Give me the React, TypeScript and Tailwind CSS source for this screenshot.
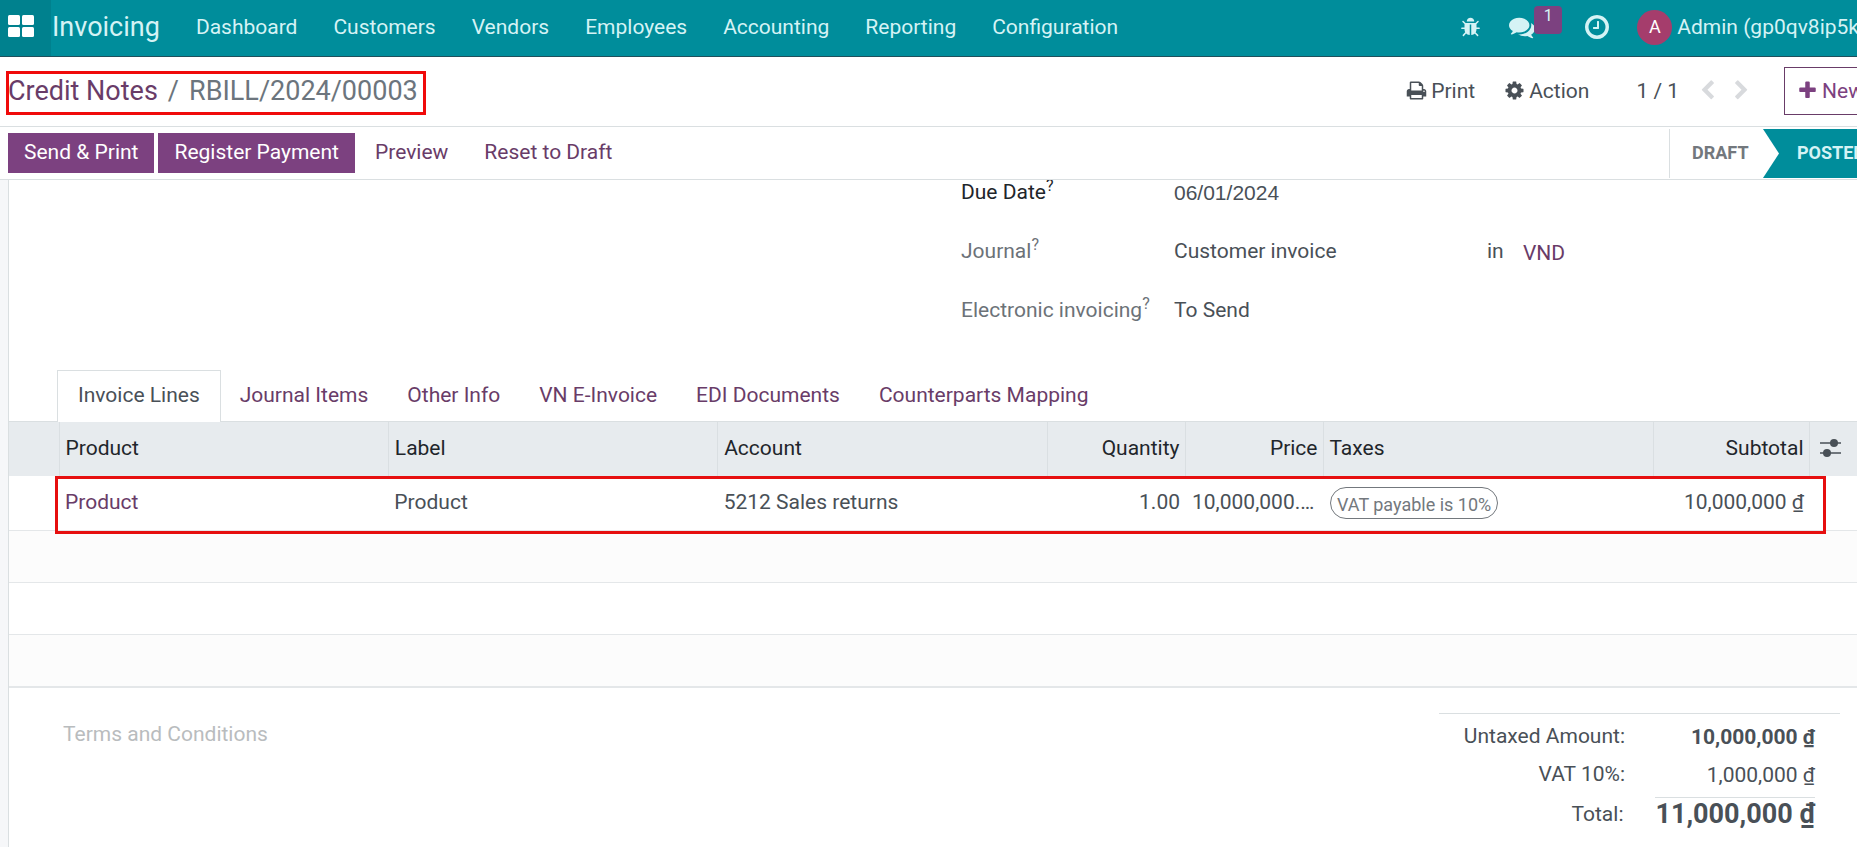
import React from 'react';

const ICONS = {
  bug: 'M1696 960q0 26-19 45t-45 19h-224q0 171-67 290l208 209q19 19 19 45t-19 45q-18 19-45 19t-45-19l-198-197q-5 5-15 13t-42 28.5-65 36.5-82 29-97 13v-896h-128v896q-51 0-101.5-13.5t-87-33-66-39-43.5-32.5l-15-14-183 207q-20 21-48 21-24 0-43-16-19-18-20.5-44.5t15.5-46.5l202-227q-58-114-58-274h-224q-26 0-45-19t-19-45 19-45 45-19h224v-294l-173-173q-19-19-19-45t19-45 45-19 45 19l173 173h844l173-173q19-19 45-19t45 19 19 45-19 45l-173 173v294h224q26 0 45 19t19 45zm-480-576h-640q0-133 93.5-226.5t226.5-93.5 226.5 93.5 93.5 226.5z',
  comments:
    'M1408 768q0 139-94 257t-256.5 186.5-353.5 68.5q-86 0-176-16-124 88-278 128-36 9-86 16h-3q-11 0-20.5-8t-11.5-21q-1-3-1-6.5t.5-6.5 2-6l2.5-5 3.5-5.5 4-5 4.5-5 4-4.5q5-6 23-25t26-29.5 22.5-29 25-38.5 20.5-44q-124-72-195-177t-71-224q0-139 94-257t256.5-186.5 353.5-68.5 353.5 68.5 256.5 186.5 94 257zm384 256q0 120-71 224.5t-195 176.5q10 24 20.5 44t25 38.5 22.5 29 26 29.5 23 25q1 1 4 4.5t4.5 5 4 5 3.5 5.5l2.5 5 2 6 .5 6.5-1 6.5q-3 14-13 22t-22 7q-50-7-86-16-154-40-278-128-90 16-176 16-271 0-472-132 58 4 88 4 161 0 309-45t264-129q125-92 192-212t67-254q0-77-23-152 129 71 204 178t75 230z',
  clock:
    'M1024 544v448q0 14-9 23t-23 9h-320q-14 0-23-9t-9-23v-64q0-14 9-23t23-9h224v-352q0-14 9-23t23-9h64q14 0 23 9t9 23zm416 352q0-148-73-273t-198-198-273-73-273 73-198 198-73 273 73 273 198 198 273 73 273-73 198-198 73-273zm224 0q0 209-103 385.5t-279.5 279.5-385.5 103-385.5-103-279.5-279.5-103-385.5 103-385.5 279.5-279.5 385.5-103 385.5 103 279.5 279.5 103 385.5z',
  print:
    'M448 1536h896v-256h-896v256zm0-640h896v-384h-160q-40 0-68-28t-28-68v-160h-640v640zm1152 64q0-26-19-45t-45-19-45 19-19 45 19 45 45 19 45-19 19-45zm128 0v416q0 13-9.5 22.5t-22.5 9.5h-224v160q0 40-28 68t-68 28h-960q-40 0-68-28t-28-68v-160h-224q-13 0-22.5-9.5t-9.5-22.5v-416q0-79 56.5-135.5t135.5-56.5h64v-544q0-40 28-68t68-28h672q40 0 88 20t76 48l152 152q28 28 48 76t20 88v256h64q79 0 135.5 56.5t56.5 135.5z',
  cog: 'M1152 896q0-106-75-181t-181-75-181 75-75 181 75 181 181 75 181-75 75-181zm512-109v222q0 12-8 23t-20 13l-185 28q-19 54-39 91 35 50 107 138 10 12 10 25t-9 23q-27 37-99 108t-94 71q-12 0-26-9l-138-108q-44 23-91 38-16 136-29 186-7 28-36 28h-222q-14 0-24.5-8.5t-11.5-21.5l-28-184q-49-16-90-37l-141 107q-10 9-25 9-14 0-25-11-126-114-165-168-7-10-7-23 0-12 8-23 15-21 51-66.5t54-70.5q-27-50-41-99l-183-27q-13-2-21-12.5t-8-23.5v-222q0-12 8-23t19-13l186-28q14-46 39-92-40-57-107-138-10-12-10-24 0-10 9-23 26-36 98.5-107.5t94.5-71.5q13 0 26 10l138 107q44-23 91-38 16-136 29-186 7-28 36-28h222q14 0 24.5 8.5t11.5 21.5l28 184q49 16 90 37l142-107q9-9 24-9 13 0 25 10 129 119 165 170 7 8 7 22 0 12-8 23-15 21-51 66.5t-54 70.5q26 50 41 98l183 28q13 2 21 12.5t8 23.5z',
  left: 'M1427 301l-531 531 531 531q19 19 19 45t-19 45l-166 166q-19 19-45 19t-45-19l-742-742q-19-19-19-45t19-45l742-742q19-19 45-19t45 19l166 166q19 19 19 45t-19 45z',
  right:
    'M1363 877l-742 742q-19 19-45 19t-45-19l-166-166q-19-19-19-45t19-45l531-531-531-531q-19-19-19-45t19-45l166-166q19-19 45-19t45 19l742 742q19 19 19 45t-19 45z',
  plus: 'M1600 736v192q0 40-28 68t-68 28h-416v416q0 40-28 68t-68 28h-192q-40 0-68-28t-28-68v-416h-416q-40 0-68-28t-28-68v-192q0-40 28-68t68-28h416v-416q0-40 28-68t68-28h192q40 0 68 28t28 68v416h416q40 0 68 28t28 68z',
};

const Icon: React.FC<{ name: keyof typeof ICONS; className?: string }> = ({ name, className = 'size-[21px]' }) => (
  <svg viewBox="0 0 1792 1792" fill="currentColor" className={`shrink-0 ${className}`} aria-hidden="true">
    <path d={ICONS[name]} />
  </svg>
);

const MENU = ['Dashboard', 'Customers', 'Vendors', 'Employees', 'Accounting', 'Reporting', 'Configuration'];

const Navbar = () => (
  <header className="flex h-[57px] shrink-0 items-stretch border-b border-[#1f505c] bg-[#008d9b] text-[#d5f3f5]">
    <button aria-label="Home menu" className="w-[51px] shrink-0 bg-[#00818e] pb-1 pl-2 text-white">
      <svg viewBox="0 0 26 22" className="h-[22px] w-[26px]" fill="currentColor" preserveAspectRatio="none">
        <rect x="0" y="0" width="12" height="10" rx="1.5" />
        <rect x="14" y="0" width="12" height="10" rx="1.5" />
        <rect x="0" y="12" width="12" height="10" rx="1.5" />
        <rect x="14" y="12" width="12" height="10" rx="1.5" />
      </svg>
    </button>
    <a href="#" className="flex items-center pb-0.5 pl-px text-[27px]">Invoicing</a>
    <nav className="flex items-center gap-9 pb-0.5 pl-9">
      {MENU.map((item) => (
        <a key={item} href="#">{item}</a>
      ))}
    </nav>
    <div className="-mr-0.5 ml-auto flex shrink-0 items-center pb-0.5">
      <button aria-label="Debug"><Icon name="bug" /></button>
      <button aria-label="Messages" className="relative ml-7">
        <Icon name="comments" className="size-[26px]" />
        <span className="absolute -top-2 left-[25px] h-7 w-7 rounded bg-[#7c4180] text-center text-base leading-5">1</span>
      </button>
      <button aria-label="Activities" className="ml-12"><Icon name="clock" className="size-7" /></button>
      <button className="ml-[26px] flex items-center gap-[5px]">
        <span className="flex size-[35px] items-center justify-center rounded-full bg-[#a53d6c] text-lg text-white">A</span>
        Admin (gp0qv8ip5k
      </button>
    </div>
  </header>
);

const ControlPanel = () => (
  <div className="flex h-[70px] shrink-0 items-center border-b border-[#dadfe1] pb-0.5">
    <div className="relative ml-2 flex items-center gap-2.5 text-[27px] text-[#6c757d]">
      <a href="#" className="text-[#693c68]">Credit Notes</a>
      <span>/</span>
      <span>RBILL/2024/00003</span>
      <div className="pointer-events-none absolute -bottom-2 -left-0.5 -right-2 -top-1 border-[3px] border-[#f00a0a]" />
    </div>
    <div className="-mr-5 ml-auto flex shrink-0 items-center">
      <button className="flex items-center gap-1"><Icon name="print" />Print</button>
      <button className="ml-[29px] flex items-center gap-1"><Icon name="cog" />Action</button>
      <span className="ml-[47px]">1 / 1</span>
      <button aria-label="Previous" className="ml-[18px] text-[#d8dadd]"><Icon name="left" /></button>
      <button aria-label="Next" className="ml-[13px] text-[#d8dadd]"><Icon name="right" /></button>
      <button className="ml-8 flex h-12 items-center gap-1 border border-[#693c68] px-3 text-[#7c4180]">
        <Icon name="plus" />New
      </button>
    </div>
  </div>
);

const StatusBar = () => (
  <div className="flex h-[53px] shrink-0 items-center border-b border-[#dadfe1] pl-2">
    <div className="flex gap-1">
      <button className="h-10 bg-[#7c4180] px-4 pb-0.5 text-white">Send &amp; Print</button>
      <button className="h-10 bg-[#7c4180] px-4 pb-0.5 text-white">Register Payment</button>
      <button className="h-10 px-4 pb-0.5 text-[#693c68]">Preview</button>
      <button className="h-10 px-4 pb-0.5 text-[#693c68]">Reset to Draft</button>
    </div>
    <div className="-mr-7 ml-auto flex h-[49px] shrink-0 items-center text-lg font-bold">
      <span className="flex h-full w-[94px] items-center border-l border-[#dadfe1] pl-[22px] text-[#73787d]">DRAFT</span>
      <span className="relative flex h-full w-[122px] items-center bg-[#008d9b] pl-[34px] text-[#d5f3f5]">
        <svg viewBox="0 0 16 49" className="absolute left-0 top-0 h-full w-4" aria-hidden="true">
          <path d="M0 0L16 24.5L0 49Z" fill="#fff" />
        </svg>
        POSTED
      </span>
    </div>
  </div>
);

const FieldLabel: React.FC<{ text: string; required?: boolean }> = ({ text, required }) => (
  <span className={`w-[213px] shrink-0 ${required ? 'text-[#1f262b]' : 'text-[#6c7278]'}`}>
    {text}
    <sup className="-top-2 text-base leading-none">?</sup>
  </span>
);

const Fields = () => (
  <div className="-mt-1 ml-[952px] flex flex-col pb-[17px]">
    <div className="flex h-[59px] items-start">
      <FieldLabel text="Due Date" required />
      <span className="pt-px font-['Liberation_Sans',sans-serif]">06/01/2024</span>
    </div>
    <div className="flex h-[59px] items-start">
      <FieldLabel text="Journal" />
      <span className="w-[313px]">Customer invoice</span>
      <span className="w-9">in</span>
      <a href="#" className="pt-0.5 text-[#693c68]">VND</a>
    </div>
    <div className="flex h-[59px] items-start">
      <FieldLabel text="Electronic invoicing" />
      <span>To Send</span>
    </div>
  </div>
);

const TABS = ['Invoice Lines', 'Journal Items', 'Other Info', 'VN E-Invoice', 'EDI Documents', 'Counterparts Mapping'];

const Tabs = () => (
  <div role="tablist" className="flex h-[52px] border-b border-[#dadfe1] pl-[49px]">
    {TABS.map((tab, i) => (
      <button
        key={tab}
        role="tab"
        aria-selected={i === 0}
        className={`-mb-px -ml-px border border-b-0 pb-1 ${
          i === 0 ? 'border-[#dadfe1] bg-white px-5' : 'border-transparent px-[19px] text-[#693c68]'
        }`}
      >
        {tab}
      </button>
    ))}
  </div>
);

const TH = 'border-l border-[#dadfe2] pb-0.5 pl-1.5 pr-[5px] font-normal';
const TD = 'pb-0.5 pl-1.5 pr-[5px]';

const InvoiceLines = () => (
  <div className="relative">
    <table className="w-full table-fixed border-collapse">
      <colgroup>
        <col className="w-[50px]" />
        <col />
        <col />
        <col />
        <col className="w-[138px]" />
        <col className="w-[138px]" />
        <col className="w-[330px]" />
        <col className="w-[156px]" />
        <col className="w-12" />
      </colgroup>
      <thead>
        <tr className="h-[54px] bg-[#e7ebee] text-left text-[#1f262b]">
          <th />
          <th className={TH}>Product</th>
          <th className={TH}>Label</th>
          <th className={TH}>Account</th>
          <th className={`${TH} text-right`}>Quantity</th>
          <th className={`${TH} text-right`}>Price</th>
          <th className={TH}>Taxes</th>
          <th className={`${TH} text-right`}>Subtotal</th>
          <th className="border-l border-[#dadfe2] pb-0.5 pl-2.5">
            <button aria-label="Optional columns" className="block text-[#495057]">
              <svg viewBox="0 0 21 20" className="h-5 w-[21px]" aria-hidden="true">
                <path d="M0 5H21M0 15H21" stroke="currentColor" strokeWidth="1.6" />
                <circle cx="14" cy="5" r="4" fill="currentColor" />
                <circle cx="7" cy="15" r="4" fill="currentColor" />
              </svg>
            </button>
          </th>
        </tr>
      </thead>
      <tbody>
        <tr className="h-[54px] border-b border-[#e4e7e9]">
          <td />
          <td className={TD}><a href="#" className="text-[#693c68]">Product</a></td>
          <td className={TD}>Product</td>
          <td className={TD}>5212 Sales returns</td>
          <td className={`${TD} text-right`}>1.00</td>
          <td className="truncate px-[7px] pb-0.5">10,000,000.00</td>
          <td className="px-[7px]">
            <span className="flex h-8 w-fit items-center rounded-full border border-[#73787d] px-1.5 pt-1 text-lg text-[#73787d]">
              VAT payable is 10%
            </span>
          </td>
          <td className={`${TD} text-right`}>10,000,000 ₫</td>
          <td />
        </tr>
        <tr className="h-[52px] border-b border-[#e4e7e9] bg-[#fcfcfc]"><td colSpan={9} /></tr>
        <tr className="h-[52px] border-b border-[#e4e7e9]"><td colSpan={9} /></tr>
        <tr className="h-[53px] border-b-2 border-[#e4e7e9] bg-[#fcfcfc]"><td colSpan={9} /></tr>
      </tbody>
    </table>
    <div className="pointer-events-none absolute left-[46px] right-[31px] top-[54px] h-[58px] border-[3px] border-[#e60f0f]" />
  </div>
);

const Totals = () => (
  <div className="mr-[17px] flex w-[401px] shrink-0 flex-col border-t border-[#dadfe1] pr-[25px] text-right">
    <div className="flex justify-end pt-1.5">
      <span>Untaxed Amount:</span>
      <span className="w-[190px] pt-px font-bold">10,000,000 ₫</span>
    </div>
    <div className="flex justify-end pt-[5px]">
      <span>VAT 10%:</span>
      <span className="w-[190px] pt-px">1,000,000 ₫</span>
    </div>
    <div className="flex items-center justify-end pt-1.5">
      <span>Total:</span>
      <span className="ml-8 border-t border-[#dadfe1] text-[27px] font-bold">11,000,000 ₫</span>
    </div>
  </div>
);

export default function App() {
  return (
    <div className="flex h-screen flex-col overflow-hidden whitespace-nowrap bg-white font-[Roboto,sans-serif] text-[21px] leading-8 text-[#495057]">
      <Navbar />
      <ControlPanel />
      <StatusBar />
      <main className="min-h-0 flex-1 overflow-hidden bg-[#f6f7f9] pl-2">
        <div className="flow-root min-h-full border-l border-[#dadfe1] bg-white">
          <Fields />
          <Tabs />
          <InvoiceLines />
          <div className="flex items-start justify-between pt-[25px]">
            <textarea
              aria-label="Terms and Conditions"
              placeholder="Terms and Conditions"
              className="ml-[54px] h-20 w-1/2 resize-none pt-[5px] outline-none placeholder:text-[#b9bcbe]"
            />
            <Totals />
          </div>
        </div>
      </main>
    </div>
  );
}
